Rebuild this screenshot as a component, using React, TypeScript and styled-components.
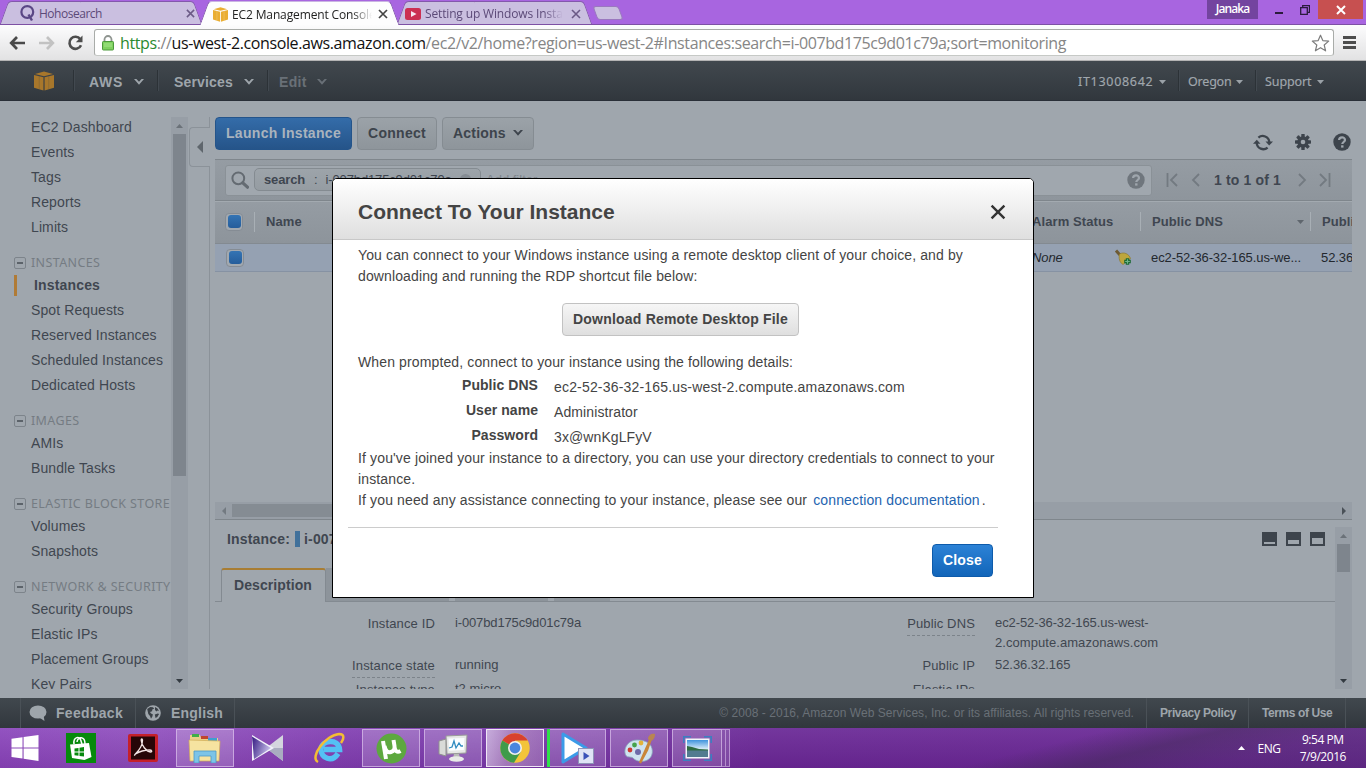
import React from 'react';
import styled, { createGlobalStyle, css } from 'styled-components';

const SANS = '"Liberation Sans", Arial, sans-serif';
const NOTO = '"Noto Sans", Tahoma, sans-serif';
const SEGOE = '"Open Sans", "Segoe UI", sans-serif';

const Global = createGlobalStyle`
  * { box-sizing: border-box; }
  body { margin: 0; background: #a0a6ac; overflow: hidden; font-family: ${SANS}; }
  svg { display: block; flex: none; }
`;

const Screen = styled.div`
  width: 1366px;
  height: 768px;
  display: flex;
  flex-direction: column;
  position: relative;
  overflow: hidden;
  background: #9fa6ad;
`;

/* ---------- browser window ---------- */

const TabStrip = styled.div`
  height: 25px;
  flex: none;
  display: flex;
  background: #a865e0;
  border-bottom: 1px solid #7d50a4;
`;

const TabBox = styled.div<{ $active?: boolean; $width: number; $pad: number }>`
  position: relative;
  z-index: ${p => (p.$active ? 2 : 1)};
  width: ${p => p.$width}px;
  height: ${p => (p.$active ? 25 : 24)}px;
  display: flex;
  align-items: center;
  padding: 3px 0 0 ${p => p.$pad}px;
  font: 12px ${SEGOE};
  color: ${p => (p.$active ? '#222' : '#5c4a78')};
  &::before, &::after {
    content: '';
    position: absolute;
    z-index: -1;
    top: 1px;
    bottom: 0;
    background: ${p => (p.$active ? '#fdfdfe' : '#cabfe0')};
    border-top: 1px solid ${p => (p.$active ? '#c9b4e2' : '#8359ab')};
  }
  &::before {
    left: 4px;
    right: 42%;
    transform: skewX(-20deg);
    border-left: 1px solid #8359ab;
    border-top-left-radius: 4px;
  }
  &::after {
    left: 42%;
    right: 2px;
    transform: skewX(20deg);
    border-right: 1px solid #8359ab;
    border-top-right-radius: 4px;
  }
`;

const TabTitle = styled.span<{ $width: number; $track: number; $fade?: boolean }>`
  width: ${p => p.$width}px;
  margin-left: 4px;
  letter-spacing: ${p => p.$track}px;
  white-space: nowrap;
  overflow: hidden;
  ${p => p.$fade && css`mask-image: linear-gradient(to right, #000 86%, transparent 100%);`}
`;

const NewTab = styled.div`
  width: 26px;
  height: 14px;
  margin: 6px 0 0 5px;
  background: #cabfe0;
  border: 1px solid #9a78bf;
  border-radius: 3px;
  transform: skewX(20deg);
`;

const WindowControls = styled.div`
  margin-left: auto;
  margin-right: 3px;
  height: 19px;
  display: flex;
  align-items: center;
`;

const UserChip = styled.div`
  width: 51px;
  height: 19px;
  margin-right: 17px;
  background: #73449f;
  color: #fff;
  font: 600 12px/18px ${SEGOE};
  letter-spacing: -0.95px;
  text-align: center;
`;

const CloseWindow = styled.div`
  width: 45px;
  height: 19px;
  margin-left: 8px;
  background: #c75050;
  display: grid;
  place-items: center;
`;

const Toolbar = styled.div`
  height: 36px;
  flex: none;
  display: flex;
  align-items: center;
  padding: 0 10px 0 9px;
  background: linear-gradient(#fcfcfd, #e2e2e3);
  border-bottom: 1px solid #b4b4b4;
`;

const AddressBar = styled.div`
  width: 1240px;
  height: 27px;
  margin-left: 10px;
  margin-right: 9px;
  display: flex;
  align-items: center;
  padding: 0 3px 0 7px;
  background: #fff;
  border: 1px solid #a9aca9;
  border-bottom-color: #c6c9c6;
  border-radius: 3px;
`;

const Url = styled.div`
  flex: 1;
  margin-left: 6px;
  font: 16px/24px ${SEGOE};
  letter-spacing: -0.383px;
  white-space: nowrap;
  color: #868686;
  b { font-weight: 400; color: #111; }
  i { font-style: normal; color: #2b8a2f; }
`;

/* ---------- console navigation ---------- */

const NavBar = styled.div`
  height: 40px;
  flex: none;
  display: flex;
  align-items: center;
  padding-left: 34px;
  background: linear-gradient(#41484e, #31373d);
  border-bottom: 1px solid #292f38;
`;

const NavSep = styled.div<{ $gap: number }>`
  width: 1px;
  height: 21px;
  margin-left: ${p => p.$gap}px;
  background: #2c3237;
  box-shadow: 1px 0 0 #424950;
`;

const NavItem = styled.div<{ $left: number; $width: number; $muted?: boolean; $track?: number }>`
  margin-left: ${p => p.$left}px;
  width: ${p => p.$width}px;
  display: flex;
  align-items: center;
  justify-content: space-between;
  padding-top: 2px;
  font: bold 14px/20px ${SANS};
  letter-spacing: ${p => p.$track ?? 0.17}px;
  color: ${p => (p.$muted ? '#697077' : '#9ea5ab')};
`;

const AccountItem = styled(NavItem)`
  font: 12.5px/18px ${NOTO};
  letter-spacing: ${p => p.$track}px;
  color: #a0a7ad;
  padding-top: 2px;
  -webkit-text-stroke: 0.15px #a0a7ad;
`;

const Push = styled.div`
  flex: 1;
`;

/* ---------- page body ---------- */

const Body = styled.div`
  height: 597px;
  flex: none;
  display: flex;
  padding-top: 16px;
  padding-bottom: 9px;
  color: #3f4650;
`;

const SideNav = styled.nav`
  width: 171px;
  height: 572px;
  overflow: hidden;
  padding-left: 14px;
`;

const SideItem = styled.div<{ $current?: boolean }>`
  height: 25px;
  padding-left: 17px;
  font: 14px/25px ${SANS};
  letter-spacing: 0.107px;
  white-space: nowrap;
  &:first-child { margin-top: -2px; }
  ${p => p.$current && css`
    height: 21px;
    margin: 2px 0;
    padding-left: 17px;
    line-height: 21px;
    border-left: 3px solid #b07b36;
    font-weight: bold;
    letter-spacing: 0.16px;
  `}
`;

const SideHeading = styled.div`
  height: 33px;
  padding-top: 12px;
  display: flex;
  align-items: center;
  gap: 5px;
  font: 12.5px/21px ${NOTO};
  letter-spacing: 0.38px;
  color: #757c83;
  white-space: nowrap;
`;

const Collapse = styled.span`
  width: 12px;
  height: 12px;
  border: 1px solid #7d848b;
  border-radius: 2px;
  display: grid;
  place-items: center;
  &::after { content: ''; width: 6px; height: 2px; background: #5c636a; }
`;

const VScroll = styled.div<{ $height: number }>`
  width: 17px;
  height: ${p => p.$height}px;
  flex: none;
  display: flex;
  flex-direction: column;
  align-items: center;
  background: #979ea6;
`;

const VThumb = styled.div<{ $height: number }>`
  width: 13px;
  height: ${p => p.$height}px;
  background: #7e858d;
`;

const ArrowCell = styled.div`
  width: 17px;
  height: 17px;
  flex: none;
  display: grid;
  place-items: center;
`;

const Divider = styled.div`
  width: 22px;
  height: 572px;
  display: flex;
  flex-direction: column;
  align-items: flex-end;
`;

const DividerLine = styled.div<{ $height: number }>`
  width: 1px;
  height: ${p => p.$height}px;
  background: #8b9299;
`;

const Handle = styled.div`
  width: 21px;
  height: 40px;
  border: 1px solid #8b9299;
  border-right: 0;
  border-radius: 4px 0 0 4px;
  display: flex;
  align-items: center;
  padding-left: 7px;
`;

const Main = styled.main`
  width: 1137px;
  height: 572px;
  margin-left: 5px;
  overflow: hidden;
`;

const Actions = styled.div`
  height: 42px;
  display: flex;
  align-items: flex-start;
`;

const ActionButton = styled.div<{ $primary?: boolean; $width: number; $gap?: number; $track: number }>`
  width: ${p => p.$width}px;
  height: 33px;
  margin-right: ${p => p.$gap ?? 5}px;
  padding: 0 0 1px 10px;
  display: flex;
  align-items: center;
  gap: 7px;
  border: 1px solid ${p => (p.$primary ? '#24548a' : '#858c92')};
  border-radius: 4px;
  background: ${p => (p.$primary ? 'linear-gradient(#346ca9, #255489)' : 'linear-gradient(#9ba2a8, #8e959b)')};
  font: bold 14px ${SANS};
  letter-spacing: ${p => p.$track}px;
  color: ${p => (p.$primary ? '#a9b3bd' : '#3d444c')};
  white-space: nowrap;
`;

const ToolIcons = styled.div`
  margin-left: auto;
  display: flex;
  align-items: center;
  gap: 22px;
  padding: 16px 1px 0 0;
`;

const FilterBar = styled.div`
  height: 42px;
  display: flex;
  align-items: center;
  padding-left: 10px;
  background: linear-gradient(#959ca3, #8e959c);
  border-top: 1px solid #7f868c;
  border-bottom: 1px solid #7f868c;
`;

const FilterInput = styled.div`
  width: 927px;
  height: 31px;
  display: flex;
  align-items: center;
  padding: 0 6px 1px 5px;
  background: #a0a7ae;
  border: 1px solid #8a9197;
  border-radius: 3px;
`;

const FilterChip = styled.div`
  width: 227px;
  height: 23px;
  margin: 0 5px;
  padding: 0 9px 1px;
  display: flex;
  align-items: center;
  border: 1px solid #848b91;
  border-radius: 5px;
  background: linear-gradient(#9da4aa, #959ca2);
  font: 13px ${SANS};
  letter-spacing: -0.14px;
  white-space: nowrap;
`;

const ChipColon = styled.span`
  margin: 0 8px 0 9px;
`;

const ChipRemove = styled.span`
  width: 11px;
  height: 11px;
  margin-left: 8px;
  border-radius: 50%;
  background: #858c93;
`;

const Hint = styled.span`
  flex: 1;
  padding-bottom: 1px;
  font: 13px ${SANS};
  color: #7e858c;
`;

const Pager = styled.div`
  flex: 1;
  display: flex;
  align-items: center;
  padding-left: 14px;
  font: bold 14px ${SANS};
  letter-spacing: 0.15px;
`;

const PagerText = styled.span`
  margin: 0 15px 0 12px;
`;

const Table = styled.div`
  height: 301px;
`;

const HeadRow = styled.div`
  height: 43px;
  display: flex;
  align-items: center;
  padding-bottom: 2px;
  background: linear-gradient(#959ca3, #8d949b);
  border-top: 1px solid #a3aab0;
  border-bottom: 1px solid #838a91;
  font: bold 13px ${SANS};
  letter-spacing: 0.09px;
  white-space: nowrap;
`;

const DataRow = styled.div`
  height: 28px;
  display: flex;
  align-items: center;
  background: #95a1b2;
  border-bottom: 1px solid #8692a3;
  font: 13px ${SANS};
  letter-spacing: -0.1px;
  color: #23282e;
  white-space: nowrap;
`;

const CheckCell = styled.div<{ $line?: boolean }>`
  width: 40px;
  height: 20px;
  flex: none;
  padding-left: ${p => (p.$line ? 10 : 11)}px;
  display: flex;
  align-items: center;
  border-right: 1px solid ${p => (p.$line ? '#a8afb5' : 'transparent')};
`;

const Check = styled.span`
  width: 18px;
  height: 18px;
  border: 1px solid #858c94;
  border-radius: 4px;
  background: #a2a9b0;
  display: grid;
  place-items: center;
  &::after { content: ''; width: 13px; height: 13px; border-radius: 3px; background: linear-gradient(#3474b4, #255d9b); }
`;

const Cell = styled.div<{ $width: number; $line?: boolean; $pad: number; $end?: number }>`
  width: ${p => p.$width}px;
  height: 19px;
  flex: none;
  padding: 0 ${p => p.$end ?? 9}px 0 ${p => p.$pad}px;
  display: flex;
  align-items: center;
  justify-content: space-between;
  overflow: hidden;
  border-right: 1px solid ${p => (p.$line ? '#a8afb5' : 'transparent')};
`;

const HScroll = styled.div`
  height: 17px;
  display: flex;
  align-items: center;
  background: #979ea6;
`;

const HThumb = styled.div`
  width: 640px;
  height: 13px;
  margin-right: auto;
  background: #858c93;
`;

const Details = styled.section`
  height: 171px;
  display: flex;
  border-top: 1px solid #7f868c;
`;

const DetailsMain = styled.div`
  width: 1120px;
  overflow: hidden;
`;

const DetailsTitle = styled.div`
  height: 48px;
  display: flex;
  align-items: center;
  padding: 0 10px 10px 12px;
  font: bold 14px ${SANS};
  letter-spacing: 0.17px;
  white-space: nowrap;
`;

const ColorTag = styled.span`
  width: 5px;
  height: 16px;
  margin: 0 4px 0 5px;
  background: #41719b;
`;

const LayoutIcons = styled.div`
  margin-left: auto;
  display: flex;
  gap: 9px;
`;

const LayoutIcon = styled.span<{ $top: number }>`
  width: 15px;
  height: 14px;
  border: 2px solid #3d444c;
  border-top-width: ${p => p.$top}px;
`;

const Tabs = styled.div`
  height: 34px;
  display: flex;
  border-bottom: 1px solid #838a91;
`;

const DetailTab = styled.div<{ $current?: boolean; $width: number; $gap: number }>`
  width: ${p => p.$width}px;
  height: 34px;
  margin-left: ${p => p.$gap}px;
  padding-left: 12px;
  font: bold 14px/31px ${SANS};
  letter-spacing: 0.09px;
  background: ${p => (p.$current ? '#9fa6ad' : '#8d949b')};
  ${p => p.$current
    ? css`border: 1px solid #838a91; border-top: 2px solid #a87d33; border-bottom: 0; border-radius: 3px 3px 0 0;`
    : css`height: 33px;`}
`;

const Fields = styled.div`
  height: 88px;
  padding-top: 10px;
  display: flex;
  overflow: hidden;
`;

const FieldColumn = styled.div<{ $label: number }>`
  width: 540px;
  display: grid;
  grid-template-columns: ${p => p.$label}px 1fr;
  column-gap: 20px;
  grid-template-rows: 42px 24px 24px;
  align-items: start;
  font: 13px/20px ${SANS};
  letter-spacing: 0.06px;
  white-space: nowrap;
`;

const FieldLabel = styled.div<{ $dashed?: boolean }>`
  justify-self: end;
  height: 24px;
  padding-top: 2px;
  letter-spacing: 0.14px;
  border-bottom: 1px dashed ${p => (p.$dashed ? '#7c838a' : 'transparent')};
`;

const FieldValue = styled.div<{ $track?: number }>`
  padding-top: 1px;
  letter-spacing: ${p => p.$track ?? 0}px;
`;

const SecondLine = styled.div`
  letter-spacing: 0.06px;
`;

const Footer = styled.footer`
  height: 30px;
  flex: none;
  display: flex;
  align-items: stretch;
  background: linear-gradient(#41484e, #31373d);
  color: #9ea5ab;
  padding-left: 20px;
  padding-right: 20px;
`;

const FooterItem = styled.div<{ $width: number; $pad: number; $gap?: number; $track: number; $small?: boolean }>`
  width: ${p => p.$width}px;
  padding-left: ${p => p.$pad}px;
  display: flex;
  align-items: center;
  gap: ${p => p.$gap ?? 0}px;
  border-left: 1px solid #4a5157;
  font: bold ${p => (p.$small ? 12 : 14)}px ${SANS};
  letter-spacing: ${p => p.$track}px;
  white-space: nowrap;
`;

const Copyright = styled.div`
  flex: 1;
  border-left: 1px solid #4a5157;
  padding-right: 12px;
  text-align: right;
  font: 12px/30px ${SANS};
  letter-spacing: 0.043px;
  color: #697077;
`;

/* ---------- dialog ---------- */

const Dialog = styled.div`
  position: absolute;
  z-index: 5;
  left: 332px;
  top: 178px;
  width: 702px;
  height: 420px;
  border: 1px solid #000;
  border-radius: 5px 5px 0 0;
  background: #fff;
  color: #444;
  font: 14px/21px ${SANS};
  letter-spacing: 0.126px;
`;

const DialogHead = styled.div`
  height: 61px;
  display: flex;
  align-items: center;
  justify-content: space-between;
  padding: 6px 27px 0 25px;
  border-bottom: 1px solid #c8c8c8;
  border-radius: 4px 4px 0 0;
  background: linear-gradient(#fff, #dfdfdf);
  font: bold 21px ${SANS};
  letter-spacing: 0;
`;

const DialogBody = styled.div`
  height: 288px;
  margin: 0 35px 0 15px;
  padding: 5px 0 0 10px;
  border-bottom: 1px solid #ccc;
  white-space: nowrap;
`;

const Paragraph = styled.div`
  height: 42px;
`;

const ButtonRow = styled.div`
  display: flex;
  justify-content: center;
  padding: 16px 0 16px 5px;
`;

const DialogButton = styled.div<{ $primary?: boolean; $width: number }>`
  width: ${p => p.$width}px;
  height: 33px;
  border: 1px solid ${p => (p.$primary ? '#0d5bab' : '#c2c2c2')};
  border-radius: 4px;
  background: ${p => (p.$primary ? 'linear-gradient(#2c82d6, #1265b9)' : 'linear-gradient(#f6f6f6, #dfdfdf)')};
  color: ${p => (p.$primary ? '#fff' : '#444')};
  font: bold 14px/31px ${SANS};
  letter-spacing: 0.2px;
  text-align: center;
`;

const Credentials = styled.div`
  display: grid;
  grid-template-columns: 180px 1fr;
  column-gap: 16px;
  grid-auto-rows: 25px;
  b { text-align: right; padding-top: 2px; letter-spacing: 0.054px; }
  span { padding-top: 4px; letter-spacing: 0.178px; }
  span ~ span { letter-spacing: 0.1px; }
`;

const Lines = styled.div`
  letter-spacing: 0.135px;
  a { color: #2364b0; margin: 0 2px; letter-spacing: 0.13px; }
`;

const DialogFoot = styled.div`
  display: flex;
  justify-content: flex-end;
  padding: 16px 40px 0 0;
`;

/* ---------- task bar ---------- */

const Taskbar = styled.div`
  height: 40px;
  flex: none;
  display: flex;
  align-items: stretch;
  background:
    linear-gradient(166deg, transparent 30%, rgba(64, 44, 84, 0.5) 50%, rgba(70, 44, 96, 0.3) 72%, rgba(70, 44, 96, 0.25)) 940px 0 / 426px 40px no-repeat,
    linear-gradient(rgba(255,255,255,.06), rgba(60,0,80,.14)),
    linear-gradient(90deg, #8c48bd 0, #9152bf 160px, #8442b4 330px, #7c3eae 460px, #7534a3 640px, #6b2a97 760px, #6a2a95 1366px);
`;

const TaskSlot = styled.div<{ $width: number; $kind?: 'open' | 'active'; $gap?: number }>`
  width: ${p => p.$width}px;
  height: 38px;
  flex: none;
  margin: 1px 0 0 ${p => p.$gap ?? 4}px;
  display: grid;
  place-items: center;
  border: 1px solid transparent;
  ${p => p.$kind === 'open' && css`border-color: rgba(225, 200, 240, .65); background: linear-gradient(rgba(255,255,255,.22), rgba(255,255,255,.16));`}
  ${p => p.$kind === 'active' && css`border-color: #f0e6f6; background: linear-gradient(100deg, rgba(255,255,255,.55), rgba(220,200,215,.45) 40%, rgba(220,200,215,.3));`}
`;

const GreenBar = styled.div`
  width: 3px;
  height: 38px;
  flex: none;
  margin: 1px -5px 0 3px;
  position: relative;
  z-index: 1;
  background: #2fe04b;
`;

const StackEdge = styled.div`
  width: 4px;
  height: 38px;
  margin-top: 1px;
  border: 1px solid rgba(225, 200, 240, .55);
  border-left: 0;
  background: rgba(255, 255, 255, .14);
`;

const Tray = styled.div`
  margin-left: auto;
  margin-right: 20px;
  display: flex;
  align-items: center;
  color: #fff;
  font: 12px ${SEGOE};
  letter-spacing: -0.45px;
`;

const Lang = styled.span`
  margin: 0 19px 0 13px;
`;

const Clock = styled.div`
  text-align: center;
  line-height: 17px;
`;

/* ---------- icons ---------- */

const Caret = ({ c = '#9ea5ab', w = 10 }: { c?: string; w?: number }) => (
  <svg width={w} height={6} viewBox="0 0 10 6"><path d="M0 0h2.4L5 2.8 7.6 0H10L5 5.8z" fill={c} /></svg>
);

const Tri = ({ dir, c, w = 7, h = 4 }: { dir: 'up' | 'down' | 'left' | 'right'; c: string; w?: number; h?: number }) => {
  const d = { up: 'M0 10L5 0l5 10z', down: 'M0 0h10L5 10z', left: 'M10 0v10L0 5z', right: 'M0 0v10l10-5z' }[dir];
  return <svg width={w} height={h} viewBox="0 0 10 10" preserveAspectRatio="none"><path d={d} fill={c} /></svg>;
};

const Cross = ({ s, c, w }: { s: number; c: string; w: number }) => (
  <svg width={s} height={s} viewBox="0 0 10 10"><path d="M1 1l8 8M9 1l-8 8" stroke={c} strokeWidth={w} fill="none" /></svg>
);

const Cube = ({ w, h, c, gap }: { w: number; h: number; c: string; gap: string }) => (
  <svg width={w} height={h} viewBox="0 0 21 20">
    <path d="M0 3.8l9.9 2.2V20L0 17z" fill={c} />
    <path d="M21 3.8l-9.9 2.2V20L21 17z" fill={c} />
    <path d="M1 2.7L10.5 0 20 2.7l-9.5 2.2z" fill={c} />
    <path d="M5.5 5v13.5M15.5 5v13.5" stroke={gap} strokeWidth=".7" opacity=".35" />
  </svg>
);

const Help = ({ s, c, bg }: { s: number; c: string; bg: string }) => (
  <svg width={s} height={s} viewBox="0 0 18 18">
    <circle cx="9" cy="9" r="8.7" fill={c} />
    <path d="M6.1 7.1C6.1 3.4 12 3.6 12 6.9c0 2-2.7 2.2-2.7 4.2" stroke={bg} strokeWidth="2.2" fill="none" />
    <rect x="8.1" y="12.3" width="2.4" height="2.3" fill={bg} />
  </svg>
);

const Refresh = () => (
  <svg width="20" height="17" viewBox="0 0 20 17">
    <path d="M5.4 3.6A6.6 6.6 0 0 1 16.3 8M14.6 13.6A6.6 6.6 0 0 1 3.7 9" stroke="#3d444c" strokeWidth="2.3" fill="none" />
    <path d="M12.5 7.4H20l-3.8 4.1zM0 9.8h7.5L3.8 5.7z" fill="#3d444c" />
  </svg>
);

const Gear = () => (
  <svg width="16" height="16" viewBox="0 0 16 16">
    <g fill="#3d444c">
      {[0, 45, 90, 135].map(a => <rect key={a} x="6.3" y="0" width="3.4" height="16" rx=".6" transform={`rotate(${a} 8 8)`} />)}
      <circle cx="8" cy="8" r="5.7" />
    </g>
    <circle cx="8" cy="8" r="2.3" fill="#9fa6ad" />
  </svg>
);

const Lens = () => (
  <svg width="18" height="18" viewBox="0 0 18 18">
    <circle cx="7.3" cy="7.3" r="5.9" stroke="#646b72" strokeWidth="2" fill="none" />
    <path d="M11.8 11.8l4.7 4.4" stroke="#646b72" strokeWidth="3.2" strokeLinecap="round" />
  </svg>
);

const PageArrow = ({ flip, end }: { flip?: boolean; end?: boolean }) => (
  <svg width="12" height="14" viewBox="0 0 12 14">
    <g transform={flip ? 'translate(12 0) scale(-1 1)' : undefined} stroke="#737a81" strokeWidth="1.8" fill="none">
      <path d={end ? 'M11 1L5 7l6 6' : 'M9 1L3 7l6 6'} />
      {end && <path d="M1.5 0v14" />}
    </g>
  </svg>
);

const Bell = () => (
  <svg width="17" height="17" viewBox="0 0 17 17">
    <path d="M1 1.5l4 4.5" stroke="#6d5a34" strokeWidth="3" />
    <path d="M4.5 5C9 2.5 14 5 15.5 9.5L8 15.5C4.5 13.5 3.5 9 4.5 5z" fill="#bda63c" stroke="#8d7a30" strokeWidth=".7" />
    <path d="M12.5 9.2v6.6M9.2 12.5h6.6" stroke="#1c6b34" strokeWidth="3.4" />
    <path d="M12.5 10.2v4.6M10.2 12.5h4.6" stroke="#6fb389" strokeWidth="1.2" />
  </svg>
);

const Back = ({ c, flip }: { c: string; flip?: boolean }) => (
  <svg width="17" height="14" viewBox="0 0 17 14">
    <path transform={flip ? 'translate(17 0) scale(-1 1)' : undefined} d="M8 1L2.2 7 8 13M2.5 7H16" stroke={c} strokeWidth="2.7" fill="none" />
  </svg>
);

const Reload = () => (
  <svg width="17" height="16" viewBox="0 0 17 16">
    <path d="M13.3 4.2A6 6 0 1 0 14 10.2" stroke="#4d4d4d" strokeWidth="2.6" fill="none" />
    <path d="M15.5 .5v6.8H8.8z" fill="#4d4d4d" />
  </svg>
);

const Lock = () => (
  <svg width="12" height="16" viewBox="0 0 12 16">
    <path d="M2.5 8V4.5a3.5 3.5 0 0 1 7 0V8" stroke="#8f9590" strokeWidth="1.8" fill="none" />
    <rect x=".5" y="6.5" width="11" height="8.5" rx=".8" fill="#7fd15f" stroke="#4c9a3c" />
    <path d="M2 9h8M2 11h8" stroke="#a5e58b" />
  </svg>
);

const Star = () => (
  <svg width="19" height="18" viewBox="0 0 19 18">
    <path d="M9.5 1.2l2.3 5.4 5.9.5-4.5 3.9 1.4 5.8-5.1-3.1-5.1 3.1 1.4-5.8L1.3 7.1l5.9-.5z" stroke="#7d7d7d" strokeWidth="1.2" fill="#fff" strokeLinejoin="round" />
  </svg>
);

const Menu = () => (
  <svg width="13" height="13" viewBox="0 0 13 13"><path d="M0 1.5h13M0 6.5h13M0 11.5h13" stroke="#4d4d4d" strokeWidth="2.8" /></svg>
);

const QMark = () => (
  <svg width="15" height="17" viewBox="0 0 15 17">
    <circle cx="7.3" cy="7" r="5.9" stroke="#5a4785" strokeWidth="2.2" fill="none" />
    <path d="M8.5 9.5l3.5 6" stroke="#5a4785" strokeWidth="2.4" />
  </svg>
);

const PlayTile = () => (
  <svg width="16" height="12" viewBox="0 0 16 12"><rect width="16" height="12" rx="2.5" fill="#cb2f52" /><path d="M6 3l5.500 3L6 9z" fill="#f6e6f2" /></svg>
);

const Bubble = () => (
  <svg width="18" height="17" viewBox="0 0 18 17"><ellipse cx="9" cy="7" rx="8.5" ry="6.6" fill="#9ea5ab" /><path d="M9.5 12l6 4-1-6z" fill="#9ea5ab" /></svg>
);

const Globe = () => (
  <svg width="16" height="16" viewBox="0 0 16 16">
    <circle cx="8" cy="8" r="7.8" fill="#9ea5ab" />
    <path d="M2.2 4l3-2 2.8.3 1.2 1.5-1.7.5-.5 2L5 7l1 1.5 1.8.7-.3 2-1.5 2.6-1-2.8L3.3 9zM10 2l2.5 1.5L14 6l-1.500-.5-1 1L10 5zM9.800 9.500l3-1 1.300.5-1.800 3-1.800 1z" fill="#3a4046" />
  </svg>
);

const WinLogo = () => (
  <svg width="28" height="26" viewBox="0 0 28 26"><path d="M.5 3.8L11.5 2.2v10.2H.5zM12.6 2L27.5 0v12.4H12.6zM.5 13.5h11v10.1L.5 22zM12.6 13.5h14.9V26l-14.9-2.2z" fill="#fff" /></svg>
);

const Store = () => (
  <svg width="30" height="30" viewBox="0 0 30 30">
    <rect width="30" height="30" fill="#068a0c" />
    <path d="M8 11C7 4 14 2 15 8l1 3M11 9c1-6 8-6 8 2" stroke="#fff" strokeWidth="1.5" fill="none" />
    <path d="M4 11.5l19-1.5 2.5 14-7 3L6 25z" fill="#fff" />
    <path d="M8.5 15.5l4-.6v3.600h-4zM13.500 14.800l4.500-.8v4.500h-4.500zM8.500 19.500h4v3.300l-4-.5zM13.500 19.500H18v4l-4.500-.6z" fill="#068a0c" />
  </svg>
);

const Acrobat = () => (
  <svg width="30" height="28" viewBox="0 0 30 28">
    <rect width="30" height="28" rx="2" fill="#c5202a" /><rect x="3" y="2.5" width="24" height="23" fill="#260607" />
    <path d="M7 20.5c3-3 7.5-9 7.5-14 0-2-1.5-2-1.3 0C13.5 11 18 17.5 22.5 18c2 0 1.5-2-1-2-5 0-10 1.5-14 4-1.5 1.3-1 1.7-.5.5z" stroke="#f3e4e4" strokeWidth="1.3" fill="none" />
  </svg>
);

const Folder = () => (
  <svg width="34" height="30" viewBox="0 0 34 30">
    <path d="M2 2h10l1 3h17v20H2z" fill="#e9d189" /><path d="M4 1h7v3H4z" fill="#3fae49" /><path d="M13 3h7v3h-7z" fill="#c0462f" /><path d="M20 5h9v3h-9z" fill="#3e9fd0" />
    <path d="M1 7l31 1-1 20H2z" fill="#f6e3a0" stroke="#d0ac55" strokeWidth=".7" />
    <path d="M6 30V18h22v12h-5v-7H11v7z" fill="#7cc4e8" stroke="#4b9bc8" strokeWidth=".8" />
  </svg>
);

const MediaBow = () => (
  <svg width="33" height="28" viewBox="0 0 33 28">
    <defs>
      <linearGradient id="bow" x1="0" x2="1" y1=".2" y2=".6"><stop offset="0" stopColor="#3c2387" /><stop offset="1" stopColor="#cfc8f0" /></linearGradient>
    </defs>
    <path d="M32 1v26L15 14z" fill="#d4d6de" /><path d="M32 14v13L15 14z" fill="#a9adc0" />
    <path d="M1 1l22 13L1 27z" fill="#f2f2fa" /><path d="M1 2.5L20 14 3 25z" fill="url(#bow)" />
  </svg>
);

const Explorer = () => (
  <svg width="32" height="32" viewBox="0 0 32 32">
    <path d="M25 21.5C19 31 8 26 8 17.5 8 8 25.5 6 26.5 17.5H11" stroke="#54c0f4" strokeWidth="5.5" fill="none" />
    <path d="M5 30C-4 25 13 3 26 2c6 0 5 5 2 9" stroke="#f4bd33" strokeWidth="2.5" fill="none" />
  </svg>
);

const Torrent = () => (
  <svg width="31" height="31" viewBox="0 0 31 31">
    <circle cx="15.5" cy="15.5" r="15" fill="#5da83f" />
    <path d="M7 8l3 18M8.5 13c1 5 3 7 6.5 6s4-3 3.5-6L17.5 7M18.5 14c.5 4 2.5 6 6 4" stroke="#fff" strokeWidth="4" fill="none" />
  </svg>
);

const Monitor = () => (
  <svg width="30" height="30" viewBox="0 0 30 30">
    <path d="M1 8l7-2v17l-7-2z" fill="#d9dbd8" stroke="#8f918e" />
    <path d="M8 3l21-1-1 18-19 1z" fill="#e6e8e6" stroke="#9a9c99" /><path d="M10.5 5.5L26.5 5l-.7 12-14.8.8z" fill="#fafdff" />
    <path d="M11 15l3-1 2-6 2 7 3-5 2 3 2 0" stroke="#2e8bc0" strokeWidth="1.3" fill="none" />
    <path d="M16 21h5l1 4h-7z" fill="#b9bbb8" /><ellipse cx="18.5" cy="26" rx="7.5" ry="2.8" fill="#e8eae7" />
  </svg>
);

const Chrome = () => (
  <svg width="30" height="30" viewBox="0 0 30 30">
    <circle cx="15" cy="15" r="14.7" fill="#f3c43a" />
    <path d="M15 15L2.3 7.6A14.7 14.7 0 0 1 27.7 7.6H15z" fill="#d8412f" />
    <path d="M2.3 7.6A14.7 14.7 0 0 0 14 29.7L21 18.5 15 15z" fill="#3f9b4b" />
    <circle cx="15" cy="15" r="7" fill="#f4f1ee" /><circle cx="15" cy="15" r="5.4" fill="#4a86dd" />
  </svg>
);

const Player = () => (
  <svg width="34" height="32" viewBox="0 0 34 32">
    <path d="M3 2l23 14L3 30z" fill="#fff" stroke="#3b9be8" strokeWidth="3" strokeLinejoin="round" />
    <rect x="18.5" y="16.5" width="15" height="15" fill="#dfe3f5" stroke="#8e93b8" /><path d="M23.5 20l6 4-6 4z" fill="#3a51b8" />
  </svg>
);

const Palette = () => (
  <svg width="31" height="31" viewBox="0 0 31 31">
    <path d="M13 7C4 7 0 15 1 20c1 6 6 3 8 5s5 4 12 3c7-2 9-9 6-15-2-4-8-6-14-6z" fill="#cfe3ef" stroke="#86a7bb" strokeWidth=".8" />
    <circle cx="6" cy="17" r="2.4" fill="#cf3a32" /><circle cx="10.5" cy="12" r="2.4" fill="#46a34c" /><circle cx="17" cy="10" r="2.4" fill="#e3b33a" /><circle cx="14" cy="19" r="3" fill="#6d6aa8" />
    <path d="M27 5L16 30l7-13z" stroke="#c98638" strokeWidth="2.4" fill="#c98638" /><path d="M24 6c0-4 4-6 7-5 0 4-2 7-5 7z" fill="#b98552" />
  </svg>
);

const Photo = () => (
  <svg width="29" height="25" viewBox="0 0 29 25">
    <defs>
      <linearGradient id="sky" x1="0" x2="0" y1="0" y2="1"><stop offset="0" stopColor="#3f93dd" /><stop offset="1" stopColor="#eaf5fb" /></linearGradient>
    </defs>
    <path d="M.8 7V.8H8M21 .8h7.2V7M28.2 18v6.2H21M8 24.2H.8V18" stroke="#3c7fc0" strokeWidth="1.6" fill="none" />
    <rect x="2.5" y="2.5" width="24" height="20" fill="#f2f6fa" /><rect x="4" y="4" width="21" height="10" fill="url(#sky)" />
    <path d="M4 10l5 1 7 2 9 .5V15H4z" fill="#2f6b43" /><path d="M4 14.500h21V21H4z" fill="#527b90" />
  </svg>
);

const Restore = () => (
  <svg width="10" height="10" viewBox="0 0 10 10"><path d="M.7 2.7h6.6v6.6H.7zM2.7 2.5V.5h6.8v6.8H7.5" stroke="#2b1a3d" strokeWidth="1.3" fill="none" /></svg>
);

const Minus = () => (
  <svg width="8" height="12" viewBox="0 0 8 12"><rect y="8" width="8" height="2" fill="#2b1a3d" /></svg>
);

const Gap = styled.span<{ $w: number }>`
  width: ${p => p.$w}px;
  flex: none;
`;

const DetailsScroll = styled.div`
  padding-top: 7px;
`;

/* ---------- data ---------- */

const sideGroups = [
  { title: '', items: ['EC2 Dashboard', 'Events', 'Tags', 'Reports', 'Limits'] },
  { title: 'INSTANCES', items: ['Instances', 'Spot Requests', 'Reserved Instances', 'Scheduled Instances', 'Dedicated Hosts'] },
  { title: 'IMAGES', items: ['AMIs', 'Bundle Tasks'] },
  { title: 'ELASTIC BLOCK STORE', items: ['Volumes', 'Snapshots'] },
  { title: 'NETWORK & SECURITY', items: ['Security Groups', 'Elastic IPs', 'Placement Groups', 'Key Pairs'] },
];

export default function App() {
  return (
    <Screen>
      <Global />
      <TabStrip>
        <TabBox $width={200} $pad={20}>
          <QMark /><TabTitle $width={147} $track={-0.48}>Hohosearch</TabTitle><Cross s={9} c="#6b5a86" w={1.7} />
        </TabBox>
        <TabBox $active $width={197} $pad={13}>
          <Cube w={15} h={15} c="#eaae33" gap="#fff" /><TabTitle $width={140} $track={-0.13} $fade>EC2 Management Console</TabTitle><Gap $w={6} /><Cross s={10} c="#444" w={1.7} />
        </TabBox>
        <TabBox $width={193} $pad={8}>
          <PlayTile /><TabTitle $width={138} $track={-0.15} $fade>Setting up Windows Instance</TabTitle><Gap $w={8} /><Cross s={10} c="#6b5a86" w={1.6} />
        </TabBox>
        <NewTab />
        <WindowControls>
          <UserChip>Janaka</UserChip><Minus /><Gap $w={17} /><Restore />
          <CloseWindow><Cross s={10} c="#fff" w={2} /></CloseWindow>
        </WindowControls>
      </TabStrip>
      <Toolbar>
        <Back c="#4a4a4a" /><Gap $w={12} /><Back c="#c2c2c2" flip /><Gap $w={12} /><Reload />
        <AddressBar>
          <Lock />
          <Url><i>https</i>://<b>us-west-2.console.aws.amazon.com</b>/ec2/v2/home?region=us-west-2#Instances:search=i-007bd175c9d01c79a;sort=monitoring</Url>
          <Star />
        </AddressBar>
        <Menu />
      </Toolbar>

      <NavBar>
        <Cube w={20} h={20} c="#a8772b" gap="#3b4248" />
        <NavSep $gap={19} />
        <NavItem $left={15} $width={55} $track={0.7}>AWS<Caret /></NavItem>
        <NavSep $gap={13} />
        <NavItem $left={16} $width={80}>Services<Caret /></NavItem>
        <NavSep $gap={13} />
        <NavItem $left={11} $width={48} $muted $track={0.3}>Edit<Caret c="#697077" /></NavItem>
        <Push />
        <AccountItem $left={0} $width={88} $track={0.7}>IT13008642<Tri dir="down" c="#9aa1a7" w={7} h={4} /></AccountItem>
        <NavSep $gap={12} />
        <AccountItem $left={9} $width={55} $track={-0.2}>Oregon<Tri dir="down" c="#9aa1a7" w={7} h={4} /></AccountItem>
        <NavSep $gap={12} />
        <AccountItem $left={9} $width={59} $track={-0.1}>Support<Tri dir="down" c="#9aa1a7" w={7} h={4} /></AccountItem>
        <Gap $w={42} />
      </NavBar>

      <Body>
        <SideNav>
          {sideGroups.map((g, gi) => (
            <div key={gi}>
              {g.title && <SideHeading><Collapse />{g.title}</SideHeading>}
              {g.items.map(item => <SideItem key={item} $current={item === 'Instances'}>{item}</SideItem>)}
            </div>
          ))}
        </SideNav>
        <VScroll $height={572}>
          <ArrowCell><Tri dir="up" c="#6b7279" w={7} /></ArrowCell>
          <VThumb $height={342} />
          <Push />
          <ArrowCell><Tri dir="down" c="#333a41" w={7} /></ArrowCell>
        </VScroll>
        <Divider>
          <DividerLine $height={10} />
          <Handle><svg width="6" height="12" viewBox="0 0 6 12"><path d="M6 0v12L0 6z" fill="#5f666d" /></svg></Handle>
          <DividerLine $height={522} />
        </Divider>
        <Main>
          <Actions>
            <ActionButton $primary $width={137} $track={0.3}>Launch Instance</ActionButton>
            <ActionButton $width={80} $track={0.28}>Connect</ActionButton>
            <ActionButton $width={92} $track={0.2}>Actions<Caret c="#3d444c" /></ActionButton>
            <ToolIcons><Refresh /><Gear /><Help s={18} c="#3d444c" bg="#9fa6ad" /></ToolIcons>
          </Actions>
          <FilterBar>
            <FilterInput>
              <Lens />
              <FilterChip><b>search</b><ChipColon>:</ChipColon>i-007bd175c9d01c79a<ChipRemove /></FilterChip>
              <Hint>Add filter</Hint>
              <Help s={18} c="#6f767d" bg="#9fa6ad" />
            </FilterInput>
            <Pager>
              <PageArrow end /><Gap $w={12} /><PageArrow />
              <PagerText>1 to 1 of 1</PagerText>
              <PageArrow flip /><Gap $w={11} /><PageArrow flip end />
            </Pager>
          </FilterBar>
          <Table>
            <HeadRow>
              <CheckCell $line><Check /></CheckCell>
              <Cell $width={766} $pad={11}>Name</Cell>
              <Cell $width={120} $pad={11} $line>Alarm Status</Cell>
              <Cell $width={170} $pad={11} $line $end={6}>Public DNS<Tri dir="down" c="#5f666d" w={7} h={4} /></Cell>
              <Cell $width={80} $pad={11}>Public IP</Cell>
            </HeadRow>
            <DataRow>
              <CheckCell><Check /></CheckCell>
              <Cell $width={766} $pad={11} />
              <Cell $width={120} $pad={11} $end={8}><i>None</i><Bell /></Cell>
              <Cell $width={170} $pad={10}>ec2-52-36-32-165.us-we...</Cell>
              <Cell $width={80} $pad={10}>52.36.32.165</Cell>
            </DataRow>
          </Table>
          <HScroll>
            <ArrowCell><Tri dir="left" c="#737a81" w={4} h={8} /></ArrowCell>
            <HThumb />
            <ArrowCell><Tri dir="right" c="#4a5158" w={4} h={8} /></ArrowCell>
          </HScroll>
          <Details>
            <DetailsMain>
              <DetailsTitle>
                Instance:<ColorTag />i-007bd175c9d01c79a
                <LayoutIcons><LayoutIcon $top={10} /><LayoutIcon $top={8} /><LayoutIcon $top={6} /></LayoutIcons>
              </DetailsTitle>
              <Tabs>
                <DetailTab $current $width={105} $gap={6}>Description</DetailTab>
                <DetailTab $width={123} $gap={0} />
                <DetailTab $width={93} $gap={6} />
                <DetailTab $width={56} $gap={6} />
              </Tabs>
              <Fields>
                <FieldColumn $label={220}>
                  <FieldLabel>Instance ID</FieldLabel><FieldValue $track={-0.14}>i-007bd175c9d01c79a</FieldValue>
                  <FieldLabel $dashed>Instance state</FieldLabel><FieldValue>running</FieldValue>
                  <FieldLabel>Instance type</FieldLabel><FieldValue>t2.micro</FieldValue>
                </FieldColumn>
                <FieldColumn $label={220}>
                  <FieldLabel $dashed>Public DNS</FieldLabel><FieldValue $track={-0.1}>ec2-52-36-32-165.us-west-<SecondLine>2.compute.amazonaws.com</SecondLine></FieldValue>
                  <FieldLabel>Public IP</FieldLabel><FieldValue $track={-0.05}>52.36.32.165</FieldValue>
                  <FieldLabel>Elastic IPs</FieldLabel><FieldValue />
                </FieldColumn>
              </Fields>
            </DetailsMain>
            <DetailsScroll>
              <VScroll $height={162}>
                <ArrowCell><Tri dir="up" c="#6b7279" w={7} /></ArrowCell>
                <VThumb $height={28} />
                <Push />
                <ArrowCell><Tri dir="down" c="#333a41" w={7} /></ArrowCell>
              </VScroll>
            </DetailsScroll>
          </Details>
        </Main>
      </Body>

      <Footer>
        <FooterItem $width={115} $pad={8} $gap={9} $track={0.3}><Bubble />Feedback</FooterItem>
        <FooterItem $width={99} $pad={9} $gap={10} $track={0.2}><Globe />English</FooterItem>
        <Copyright>© 2008 - 2016, Amazon Web Services, Inc. or its affiliates. All rights reserved.</Copyright>
        <FooterItem $width={102} $pad={13} $small $track={-0.385}>Privacy Policy</FooterItem>
        <FooterItem $width={97} $pad={13} $small $track={-0.4}>Terms of Use</FooterItem>
        <FooterItem $width={1} $pad={0} $track={0} />
      </Footer>

      <Taskbar>
        <Gap $w={8} />
        <TaskSlot $width={32} $gap={1}><WinLogo /></TaskSlot>
        <TaskSlot $width={58} $gap={11}><Store /></TaskSlot>
        <TaskSlot $width={58}><Acrobat /></TaskSlot>
        <TaskSlot $kind="open" $width={58}><Folder /></TaskSlot>
        <TaskSlot $width={58}><MediaBow /></TaskSlot>
        <TaskSlot $width={58}><Explorer /></TaskSlot>
        <TaskSlot $kind="open" $width={58}><Torrent /></TaskSlot>
        <TaskSlot $kind="open" $width={58}><Monitor /></TaskSlot>
        <TaskSlot $kind="active" $width={58}><Chrome /></TaskSlot>
        <GreenBar />
        <TaskSlot $kind="open" $width={58} $gap={3}><Player /></TaskSlot>
        <TaskSlot $kind="open" $width={58}><Palette /></TaskSlot>
        <TaskSlot $kind="open" $width={50}><Photo /></TaskSlot>
        <StackEdge /><StackEdge />
        <Tray>
          <Tri dir="up" c="#fff" w={7} h={4} />
          <Lang>ENG</Lang>
          <Clock>9:54 PM<br />7/9/2016</Clock>
        </Tray>
      </Taskbar>

      <Dialog>
        <DialogHead>Connect To Your Instance<Cross s={16} c="#333" w={1.5} /></DialogHead>
        <DialogBody>
          <Paragraph>You can connect to your Windows instance using a remote desktop client of your choice, and by<br />downloading and running the RDP shortcut file below:</Paragraph>
          <ButtonRow><DialogButton $width={237}>Download Remote Desktop File</DialogButton></ButtonRow>
          <div>When prompted, connect to your instance using the following details:</div>
          <Credentials>
            <b>Public DNS</b><span>ec2-52-36-32-165.us-west-2.compute.amazonaws.com</span>
            <b>User name</b><span>Administrator</span>
            <b>Password</b><span>3x@wnKgLFyV</span>
          </Credentials>
          <Lines>
            If you've joined your instance to a directory, you can use your directory credentials to connect to your<br />instance.<br />
            If you need any assistance connecting to your instance, please see our <a>connection documentation</a>.
          </Lines>
        </DialogBody>
        <DialogFoot><DialogButton $primary $width={61}>Close</DialogButton></DialogFoot>
      </Dialog>
    </Screen>
  );
}
